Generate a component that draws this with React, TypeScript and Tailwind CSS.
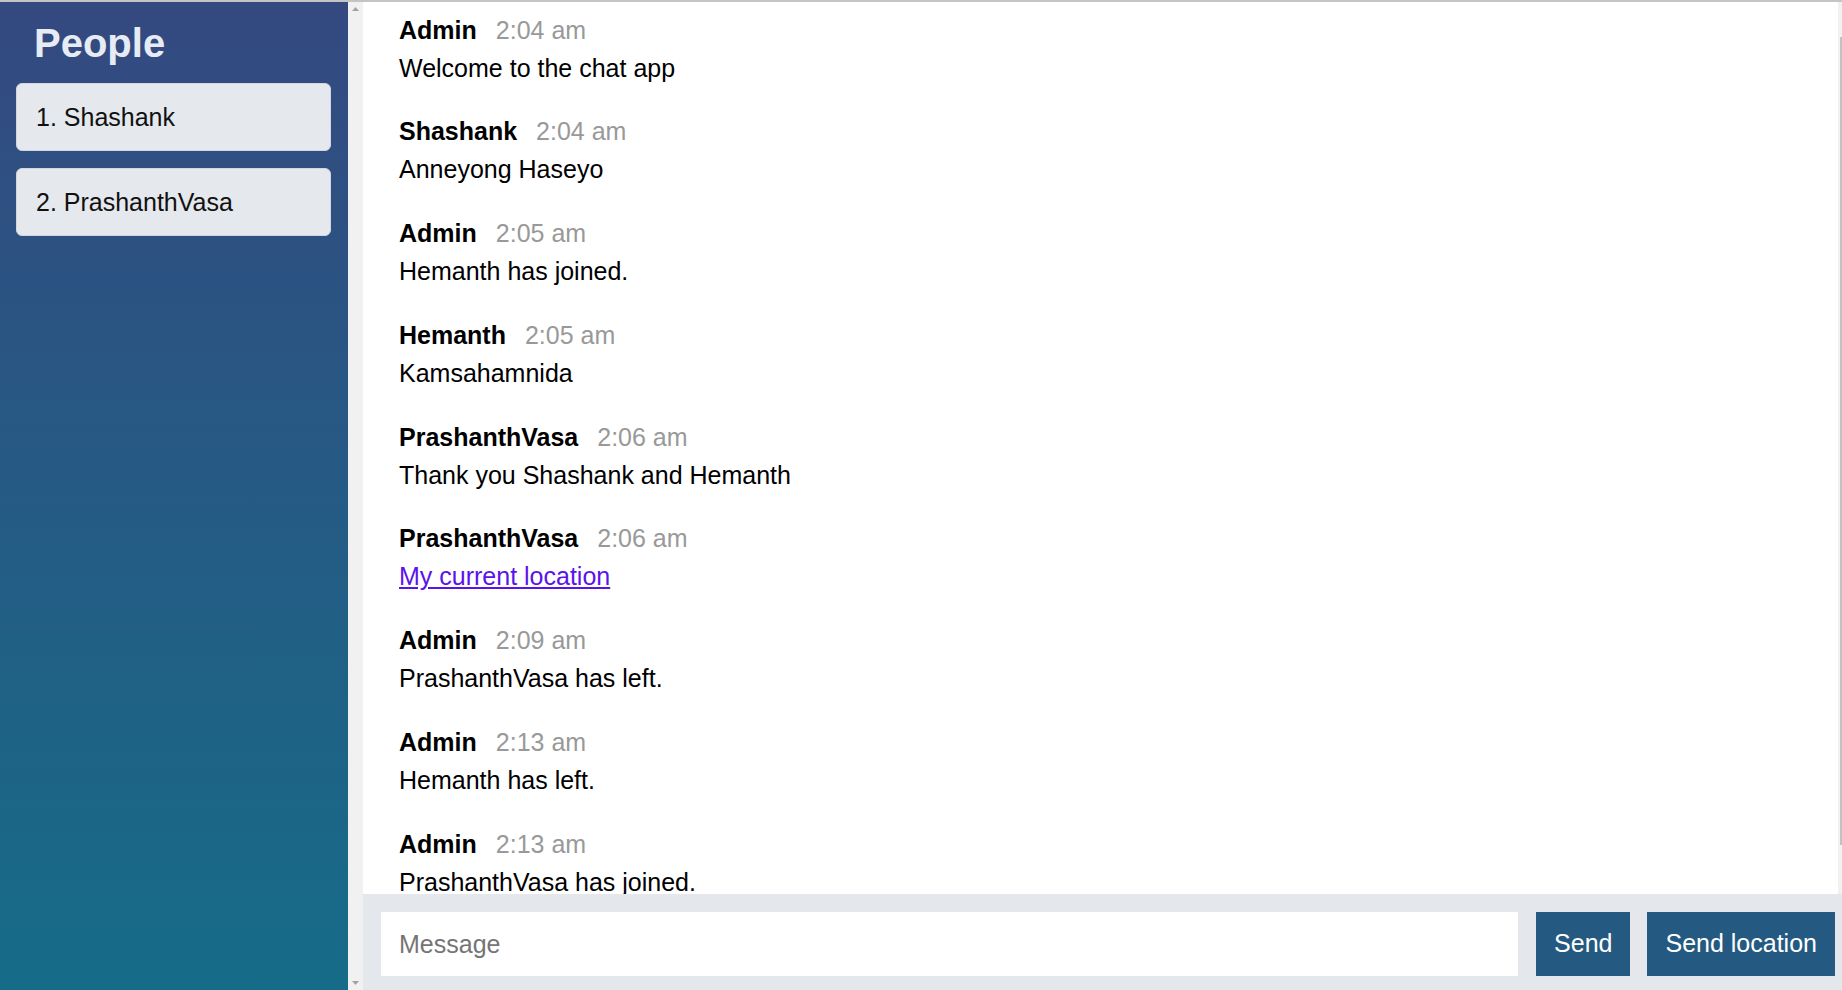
import { useEffect, useRef } from "react";

type Message = {
  from: string;
  at: string;
  text: string;
  url?: boolean;
};

const people = ["Shashank", "PrashanthVasa"];

const messages: Message[] = [
  { from: "Admin", at: "2:04 am", text: "Welcome to the chat app" },
  { from: "Shashank", at: "2:04 am", text: "Anneyong Haseyo" },
  { from: "Admin", at: "2:05 am", text: "Hemanth has joined." },
  { from: "Hemanth", at: "2:05 am", text: "Kamsahamnida" },
  { from: "PrashanthVasa", at: "2:06 am", text: "Thank you Shashank and Hemanth" },
  { from: "PrashanthVasa", at: "2:06 am", text: "My current location", url: true },
  { from: "Admin", at: "2:09 am", text: "PrashanthVasa has left." },
  { from: "Admin", at: "2:13 am", text: "Hemanth has left." },
  { from: "Admin", at: "2:13 am", text: "PrashanthVasa has joined." },
];

function Arrow({ down }: { down?: boolean }) {
  return (
    <svg width="15" height="15" viewBox="0 0 15 15">
      <path d={down ? "M4 6h7l-3.5 4z" : "M4 9h7l-3.5-4z"} fill="#a3a3a3" />
    </svg>
  );
}

export default function App() {
  const listRef = useRef<HTMLDivElement>(null);

  useEffect(() => {
    if (listRef.current) listRef.current.scrollTop = 23;
  }, []);

  return (
    <div className="h-[990px] w-full overflow-hidden border-t-2 border-[#c4c4c4] font-['Liberation_Sans',Arial,sans-serif] text-[25px]">
      <div className="flex h-full w-[1853px]">
        {/* Sidebar */}
        <aside className="flex h-full w-[363px] shrink-0 bg-[linear-gradient(to_bottom,#344980_0%,#166c88_100%)]">
          <div className="min-w-0 flex-1">
            <h2 className="mt-[21px] ml-[34px] text-[40px] font-bold leading-none text-[#e7ecf4]">
              People
            </h2>
            <ol className="mt-[20px] flex flex-col gap-[17px] pl-[16px] pr-[17px]">
              {people.map((name, i) => (
                <li
                  key={name}
                  className="rounded-[6px] border border-[#d3d7dd] bg-[#e5e8ec] py-[18px] pl-[19px] leading-[30px] text-[#111]"
                >
                  {i + 1}. {name}
                </li>
              ))}
            </ol>
          </div>
          {/* scrollbar */}
          <div className="flex w-[15px] shrink-0 flex-col justify-between bg-[#f1f1f1]">
            <Arrow />
            <Arrow down />
          </div>
        </aside>

        {/* Chat */}
        <main className="flex h-full min-w-0 flex-1 flex-col">
          <div className="flex min-h-0 flex-1 bg-white">
            <div ref={listRef} className="min-w-0 flex-1 overflow-hidden">
              <div className="px-[36px] pt-[18.7px] pb-[16px]">
                {messages.map((m, i) => (
                  <div key={i} className="py-[16.9px]">
                    <div className="mb-[8px] flex items-baseline leading-[30px]">
                      <span className="mr-[19px] font-bold text-black">{m.from}</span>
                      <span className="text-[#999]">{m.at}</span>
                    </div>
                    <p className="leading-[30px] text-black">
                      {m.url ? (
                        <a href="#" className="text-[#5a13e8] underline">
                          {m.text}
                        </a>
                      ) : (
                        m.text
                      )}
                    </p>
                  </div>
                ))}
              </div>
            </div>
            {/* scrollbar */}
            <div className="w-[15px] shrink-0 bg-[#f1f1f1] px-[2px] pt-[35px]">
              <div className="h-[808px] bg-[#c1c1c1]" />
            </div>
          </div>

          <footer className="flex shrink-0 gap-[17px] bg-[#e4e7ec] pt-[18px] pb-[14px] pl-[18px] pr-[18px]">
            <input
              placeholder="Message"
              className="mr-px h-[64px] min-w-0 flex-1 bg-white px-[18px] text-[25px] text-black outline-none placeholder:text-[#757575]"
            />
            <button className="h-[64px] bg-[#245a81] px-[18px] text-white">Send</button>
            <button className="h-[64px] bg-[#245a81] px-[18px] text-white">Send location</button>
          </footer>
        </main>
      </div>
    </div>
  );
}
